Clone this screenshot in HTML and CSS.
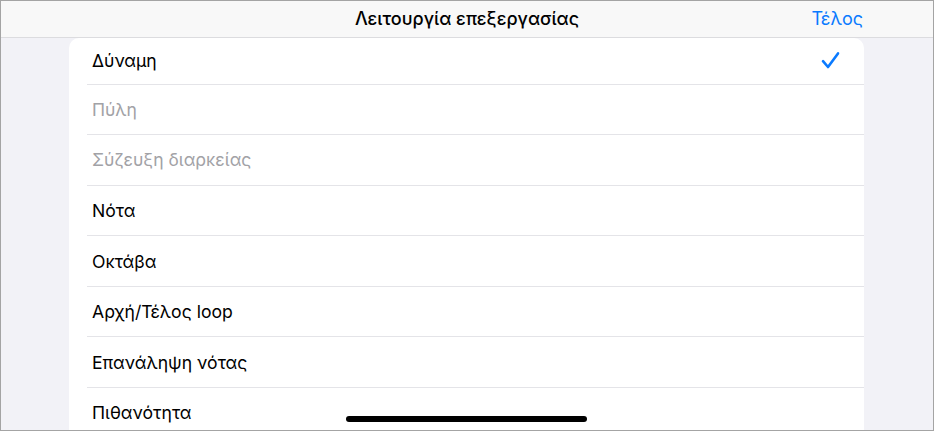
FILE: index.html
```html
<!DOCTYPE html>
<html lang="el">
<head>
<meta charset="utf-8">
<link rel="stylesheet" href="styles.css">
</head>
<body>
<div class="frame">
  <header class="navbar">
    <div class="nav-side"></div>
    <div class="nav-title">Λειτουργία επεξεργασίας</div>
    <div class="nav-side nav-done">Τέλος</div>
  </header>
  <div class="content">
    <ul class="card">
      <li class="row row-first"><span class="label">Δύναμη</span>
        <svg class="check" width="19" height="19" viewBox="0 0 19 19"><path d="M2 10.2 L7 16 L17 2.4" fill="none" stroke="#0a7aff" stroke-width="2.6" stroke-linecap="round" stroke-linejoin="round"/></svg>
      </li>
      <li class="row"><span class="label muted">Πύλη</span></li>
      <li class="row"><span class="label muted">Σύζευξη διαρκείας</span></li>
      <li class="row"><span class="label">Νότα</span></li>
      <li class="row"><span class="label">Οκτάβα</span></li>
      <li class="row"><span class="label">Αρχή/Τέλος loop</span></li>
      <li class="row"><span class="label">Επανάληψη νότας</span></li>
      <li class="row"><span class="label">Πιθανότητα</span></li>
    </ul>
  </div>
  <div class="home-indicator"></div>
</div>
</body>
</html>
```
FILE: styles.css
```css
* { box-sizing: border-box; }
html, body { margin: 0; padding: 0; }
body {
  font-family: Inter, "Noto Sans", "DejaVu Sans", sans-serif;
  -webkit-font-smoothing: antialiased;
}
.frame {
  position: relative;
  width: 934px;
  height: 431px;
  border: 1px solid #a4a4a4;
  background: #f2f2f7;
  overflow: hidden;
  display: flex;
  flex-direction: column;
}
.navbar {
  flex: 0 0 36px;
  height: 36px;
  background: #f8f8f8;
  border-bottom: 1px solid #dcdcdf;
  display: flex;
  align-items: center;
  justify-content: space-between;
  padding: 0 70px 0 70px;
  box-sizing: content-box;
}
.nav-side { width: 120px; }
.nav-title {
  font-size: 18px;
  font-weight: 500;
  color: #000;
  margin-top: -2px;
}
.nav-done {
  text-align: right;
  font-size: 18px;
  color: #0a7aff;
  margin-top: -2px;
}
.content {
  flex: 1;
  padding: 0 69px 0 68px;
  overflow: hidden;
}
.card {
  list-style: none;
  margin: 0;
  padding: 0;
  background: #fff;
  border-radius: 10px 10px 0 0;
}
.row {
  display: flex;
  align-items: center;
  justify-content: space-between;
  height: 50.6px;
  margin-left: 18px;
  padding-left: 5px;
  padding-right: 24px;
  border-bottom: 1px solid #e4e4e8;
}
.row-first { height: 46.5px; }
.label {
  font-size: 17.6px;
  color: #000;
}
.label.muted { color: #a2a2a6; }
.check { display: block; margin-top: 0; }
.home-indicator {
  position: absolute;
  left: 345px;
  top: 415px;
  width: 241px;
  height: 6px;
  border-radius: 3px;
  background: #000;
}
```
